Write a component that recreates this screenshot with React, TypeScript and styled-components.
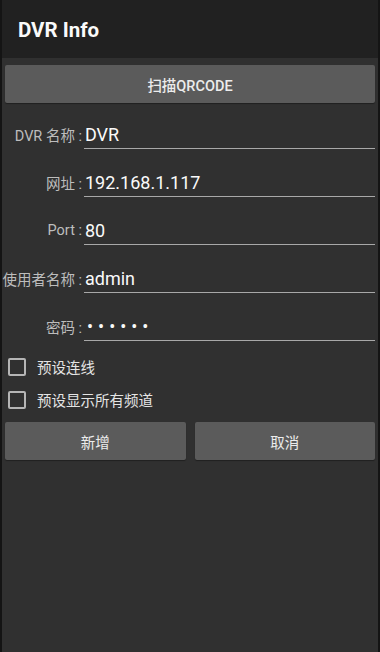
import React from 'react';
import styled, { createGlobalStyle } from 'styled-components';

const GlobalStyle = createGlobalStyle`
  html, body {
    margin: 0;
    padding: 0;
    background: #000;
  }
  * {
    box-sizing: border-box;
  }
`;

const Screen = styled.div`
  width: 380px;
  height: 652px;
  background: #303030;
  border-left: 2px solid #141414;
  border-right: 2px solid #141414;
  font-family: Roboto, "Noto Sans CJK SC", sans-serif;
  color: #fff;
  display: flex;
  flex-direction: column;
`;

const AppBar = styled.header`
  height: 58px;
  background: #212121;
  display: flex;
  align-items: center;
  padding: 0 0 0 16px;
`;

const Title = styled.h1`
  margin: 0;
  font-size: 20.5px;
  font-weight: 700;
  color: #fafafa;
  line-height: 1;
  padding-top: 2px;
`;

const Content = styled.div`
  padding: 7px 3px 0;
  display: flex;
  flex-direction: column;
`;

const Button = styled.button<{ $flex?: boolean }>`
  height: 38px;
  border: none;
  border-radius: 2px;
  background: #5b5b5b;
  color: #ececec;
  font-family: inherit;
  font-size: 14.5px;
  font-weight: ${({ $flex }) => ($flex ? 400 : 500)};
  ${({ $flex }) => ($flex ? 'flex: 1;' : 'width: 100%;')}
  box-shadow: 0 1px 1px rgba(0, 0, 0, 0.35);
`;

const Form = styled.div`
  margin-top: 7px;
  display: flex;
  flex-direction: column;
`;

const Row = styled.div`
  height: 48px;
  display: flex;
  align-items: center;
  margin-left: -3px;
`;

const Label = styled.label`
  width: 82px;
  text-align: right;
  font-size: 14.5px;
  color: #bdbdbd;
  white-space: nowrap;
  padding-right: 2px;
`;

const Field = styled.div`
  flex: 1;
  height: 28px;
  display: flex;
  align-items: center;
  border-bottom: 1px solid #a8a8a8;
  margin-top: 1px;
  padding-left: 1px;
  font-size: 18px;
  color: #fafafa;
`;

const Dots = styled.span`
  font-size: 18px;
  letter-spacing: 5px;
  padding-left: 2px;
`;

const CheckRow = styled.div`
  height: 33px;
  display: flex;
  align-items: center;
  gap: 11px;
  padding-left: 3px;
  font-size: 14.5px;
  color: #e4e4e4;
`;

const Box = styled.span`
  width: 18px;
  height: 18px;
  border: 2px solid #b5b5b5;
  border-radius: 2px;
`;

const Actions = styled.div`
  margin-top: 6px;
  display: flex;
  gap: 9px;
`;

const fields = [
  { label: 'DVR 名称 :', value: 'DVR' },
  { label: '网址 :', value: '192.168.1.117' },
  { label: 'Port :', value: '80' },
  { label: '使用者名称 :', value: 'admin' },
];

export default function App() {
  return (
    <>
      <GlobalStyle />
      <Screen>
        <AppBar>
          <Title>DVR Info</Title>
        </AppBar>
        <Content>
          <Button>扫描QRCODE</Button>
          <Form>
            {fields.map((f) => (
              <Row key={f.label}>
                <Label>{f.label}</Label>
                <Field>{f.value}</Field>
              </Row>
            ))}
            <Row>
              <Label>密码 :</Label>
              <Field>
                <Dots>••••••</Dots>
              </Field>
            </Row>
          </Form>
          <CheckRow>
            <Box />
            预设连线
          </CheckRow>
          <CheckRow>
            <Box />
            预设显示所有频道
          </CheckRow>
          <Actions>
            <Button $flex>新增</Button>
            <Button $flex>取消</Button>
          </Actions>
        </Content>
      </Screen>
    </>
  );
}
